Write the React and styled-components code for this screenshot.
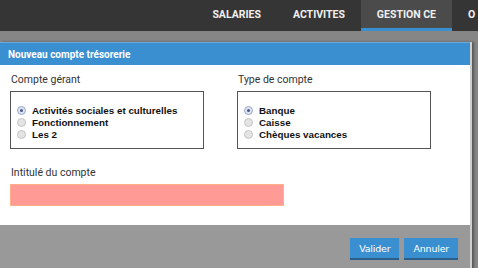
import React from "react";
import styled, { createGlobalStyle, css } from "styled-components";

const GlobalStyle = createGlobalStyle`
  html, body {
    margin: 0;
    padding: 0;
    width: 478px;
    height: 268px;
    overflow: hidden;
    background: #858585;
    font-family: Roboto, "Liberation Sans", Arial, sans-serif;
  }
`;

const Page = styled.div`
  width: 478px;
  height: 268px;
  display: flex;
  flex-direction: column;
  background: #868686;
  overflow: hidden;
`;

const TopBar = styled.div`
  height: 31px;
  background: #353535;
  display: flex;
  justify-content: flex-end;
  flex-shrink: 0;
`;

const NavItem = styled.div`
  height: 28px;
  padding: 0 16px;
  display: flex;
  align-items: center;
  color: #f0f0f0;
  font-size: 10.5px;
  font-weight: 700;
  border-bottom: 3px solid transparent;
  ${(props) =>
    props.active &&
    css`
      background: #4b4b4b;
      border-bottom-color: #3a8fd0;
    `}
  ${(props) =>
    props.cut &&
    css`
      padding-right: 0;
      width: 10px;
      overflow: hidden;
    `}
`;

const Overlay = styled.div`
  flex: 1;
  padding-top: 11px;
`;

const Modal = styled.div`
  width: 472px;
  box-sizing: border-box;
  border-right: 2px solid #cfcfcf;
  box-shadow: 2px 0 2px rgba(0, 0, 0, 0.35);
  background: #999;
`;

const ModalHeader = styled.div`
  height: 22px;
  background: #3a8fd0;
  color: #fff;
  font-size: 10px;
  font-weight: 700;
  display: flex;
  align-items: center;
  padding-left: 8px;
  border-top: 1px solid #6aa9dc;
`;

const ModalBody = styled.div`
  background: #fff;
  padding: 8px 10px 19px 10px;
`;

const Row = styled.div`
  display: grid;
  grid-template-columns: 227px 194px;
`;

const Label = styled.div`
  font-size: 10.5px;
  color: #333;
  margin: 0 0 5px 1px;
  height: 13px;
  line-height: 13px;
`;

const OptionBox = styled.div`
  width: 194px;
  height: 58px;
  box-sizing: border-box;
  border: 1px solid #555;
  padding: 12px 0 0 6px;
  display: flex;
  flex-direction: column;
`;

const Option = styled.label`
  display: flex;
  align-items: center;
  height: 12px;
  font-family: "Liberation Sans", Arial, sans-serif;
  font-size: 9.8px;
  font-weight: 700;
  color: #111;
`;

const Radio = styled.span`
  width: 7px;
  height: 7px;
  border-radius: 50%;
  border: 1px solid #c4c4c4;
  background: #e4e4e4;
  margin-right: 6px;
  display: flex;
  align-items: center;
  justify-content: center;
  ${(props) =>
    props.checked &&
    css`
      border-color: #9aa8c8;
      background: #dde3f0;
      &::after {
        content: "";
        width: 3px;
        height: 3px;
        border-radius: 50%;
        background: #4b5a80;
      }
    `}
`;

const Field = styled.div`
  margin-top: 17px;
`;

const Input = styled.div`
  width: 274px;
  height: 22px;
  box-sizing: border-box;
  background: #ff9a94;
  border: 1px solid #ffb088;
`;

const Footer = styled.div`
  height: 42px;
  display: flex;
  justify-content: flex-end;
  align-items: center;
  gap: 5px;
  padding: 3px 12px 0 0;
`;

const Button = styled.div`
  height: 20px;
  padding: 0 9px;
  display: flex;
  align-items: center;
  background: #3a8fd0;
  border-bottom: 2px solid #2a5f8a;
  color: #fff;
  font-family: "DejaVu Sans", Verdana, sans-serif;
  font-size: 9.5px;
  letter-spacing: -0.2px;
`;

function RadioGroup({ options, selected }) {
  return (
    <OptionBox>
      {options.map((o, i) => (
        <Option key={o}>
          <Radio checked={i === selected} />
          {o}
        </Option>
      ))}
    </OptionBox>
  );
}

export default function App() {
  return (
    <Page>
      <GlobalStyle />
      <TopBar>
        <NavItem>SALARIES</NavItem>
        <NavItem>ACTIVITES</NavItem>
        <NavItem active>GESTION CE</NavItem>
        <NavItem cut>O</NavItem>
      </TopBar>
      <Overlay>
        <Modal>
          <ModalHeader>Nouveau compte trésorerie</ModalHeader>
          <ModalBody>
            <Row>
              <div>
                <Label>Compte gérant</Label>
                <RadioGroup
                  options={[
                    "Activités sociales et culturelles",
                    "Fonctionnement",
                    "Les 2",
                  ]}
                  selected={0}
                />
              </div>
              <div>
                <Label>Type de compte</Label>
                <RadioGroup
                  options={["Banque", "Caisse", "Chèques vacances"]}
                  selected={0}
                />
              </div>
            </Row>
            <Field>
              <Label>Intitulé du compte</Label>
              <Input />
            </Field>
          </ModalBody>
          <Footer>
            <Button>Valider</Button>
            <Button>Annuler</Button>
          </Footer>
        </Modal>
      </Overlay>
    </Page>
  );
}
